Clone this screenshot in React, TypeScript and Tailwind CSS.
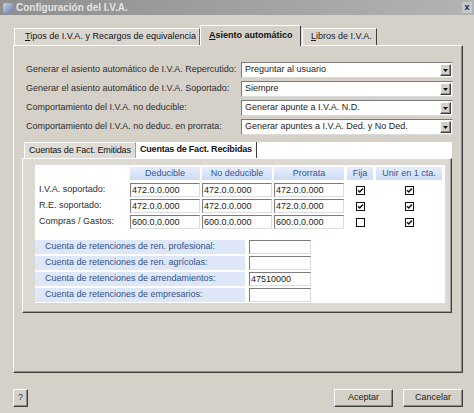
import React from "react";

const sunken =
  "border border-t-[#7b7b7b] border-l-[#7b7b7b] border-r-[#dcdcdc] border-b-[#dcdcdc]";
const raised =
  "border border-t-white border-l-white border-r-[#404040] border-b-[#404040] shadow-[inset_-1px_-1px_0_#8a8a8a]";

function Select({ value }: { value: string }) {
  return (
    <div className={`flex h-[16px] w-[212px] items-center bg-white ${sunken}`}>
      <span className="flex-1 truncate whitespace-nowrap pl-[3px] text-[#1c1c1c]">{value}</span>
      <div
        className={`mr-[1px] flex h-[12px] w-[11px] items-center justify-center bg-[#d4d0c8] ${raised}`}
      >
        <svg width="5" height="3" viewBox="0 0 5 3">
          <path d="M0 0H5L2.5 3Z" fill="#111" />
        </svg>
      </div>
    </div>
  );
}

function Field({ value, w }: { value?: string; w: string }) {
  return (
    <div className={`flex h-[14px] items-center bg-white ${sunken} ${w}`}>
      <span className="whitespace-nowrap pl-[1px] leading-none text-[#1c1c1c]">{value}</span>
    </div>
  );
}

function Check({ on }: { on: boolean }) {
  return (
    <svg width="9" height="9" viewBox="0 0 9 9">
      <rect x="0.5" y="0.5" width="8" height="8" fill="white" stroke="#111" />
      {on && <path d="M2 4.3L3.7 6L7 2.6" fill="none" stroke="#111" strokeWidth="1.5" />}
    </svg>
  );
}

function Head({ children, w }: { children: React.ReactNode; w: string }) {
  return (
    <div
      className={`flex h-[13px] items-center justify-center whitespace-nowrap bg-gradient-to-b from-[#e6eefb] to-[#cddcf4] text-[#35569a] ${w}`}
    >
      {children}
    </div>
  );
}

export default function App() {
  const formRows: [string, string][] = [
    ["Generar el asiento automático de I.V.A. Repercutido:", "Preguntar al usuario"],
    ["Generar el asiento automático de I.V.A. Soportado:", "Siempre"],
    ["Comportamiento del I.V.A. no deducible:", "Generar apunte a I.V.A. N.D."],
    ["Comportamiento del I.V.A. no deduc. en prorrata:", "Generar apuntes a I.V.A. Ded. y No Ded."],
  ];
  const tableRows: [string, string, boolean, boolean][] = [
    ["I.V.A. soportado:", "472.0.0.000", true, true],
    ["R.E. soportado:", "472.0.0.000", true, true],
    ["Compras / Gastos:", "600.0.0.000", false, true],
  ];
  const ret: [string, string][] = [
    ["Cuenta de retenciones de ren. profesional:", ""],
    ["Cuenta de retenciones de ren. agrícolas:", ""],
    ["Cuenta de retenciones de arrendamientos:", "47510000"],
    ["Cuenta de retenciones de empresarios:", ""],
  ];

  return (
    <div className="flex h-[413px] w-[474px] flex-col overflow-hidden bg-[#d5d1c9] font-['Liberation_Sans',Arial,sans-serif] text-[9px] text-[#2b2b2b]">
      {/* title bar */}
      <div className="flex h-[15px] items-center bg-gradient-to-r from-[#8e8e8e] to-[#b3b3b3] pl-[3px] pr-[2px]">
        <div className="mr-[3px] h-[10px] w-[10px] rounded-[2px] bg-gradient-to-br from-[#c9d3e6] to-[#6d7fa6]" />
        <span className="flex-1 whitespace-nowrap text-[10px] font-bold text-[#e4e4e4]">Configuración del I.V.A.</span>
        <div className="flex h-[11px] w-[10px] items-center justify-center bg-[#c8c8c8] text-[9px] font-bold leading-none text-[#222]">
          x
        </div>
      </div>

      <div className="flex flex-1 flex-col px-[11px] pl-[13px]">
        {/* outer tabs */}
        <div className="mt-[10px] flex h-[20px] items-end pl-[1px]">
          <div className="flex h-[17px] w-[186px] items-center whitespace-nowrap border border-b-0 border-t-white border-l-white border-r-[#6a6a6a] bg-[#dad6cf] pl-[10px] text-[#111]">
            <span><u>T</u>ipos de I.V.A. y Recargos de equivalencia</span>
          </div>
          <div className="relative z-10 -mb-[1px] flex h-[21px] w-[101px] items-center whitespace-nowrap border border-b-0 border-t-white border-l-white border-r-[#404040] bg-[#d5d1c9] pl-[8px] font-bold text-[#111]">
            <span><u>A</u>siento automático</span>
          </div>
          <div className="ml-[1px] flex h-[17px] w-[75px] items-center whitespace-nowrap border border-b-0 border-t-white border-l-white border-r-[#404040] bg-[#dad6cf] pl-[8px] text-[#222]">
            <span><u>L</u>ibros de I.V.A.</span>
          </div>
        </div>

        {/* outer panel */}
        <div className={`flex h-[328px] flex-col bg-[#d5d1c9] ${raised}`}>
          <div className="flex flex-col gap-[3px] pl-[12px] pt-[16px]">
            {formRows.map(([l, v]) => (
              <div key={l} className="flex items-center">
                <span className="w-[215px] whitespace-nowrap text-[#2e2e2e]">{l}</span>
                <Select value={v} />
              </div>
            ))}
          </div>

          {/* inner tab control */}
          <div className="ml-[8px] mt-[7px] flex w-[430px] flex-col">
            <div className="flex h-[16px] items-end">
              <div className="ml-[2px] flex h-[16px] w-[112px] items-center whitespace-nowrap border border-b-0 border-t-white border-l-white border-r-[#a0a0a0] bg-[#dfdcd5] pl-[4px] tracking-[-0.15px] text-[#111]">
                Cuentas de Fact. Emitidas
              </div>
              <div className="flex h-[16px] w-[121px] items-center whitespace-nowrap border-r border-r-[#404040] bg-white pl-[4px] font-bold tracking-[-0.2px] text-[#111]">
                Cuentas de Fact. Recibidas
              </div>
              <div className="h-[16px] flex-1 bg-white" />
            </div>
            <div className="flex h-[155px] flex-col border border-t-white border-l-white border-r-[#404040] border-b-[#404040] bg-[#dcd9d2] pb-[9px] pl-[12px] pr-[6px] pt-[6px] shadow-[inset_-1px_-1px_0_#9a9a9a]">
              <div className="flex flex-1 flex-col bg-white pt-[2px]">
                {/* header */}
                <div className="flex h-[13px] items-center">
                  <div className="w-[95px]" />
                  <Head w="w-[70px]">Deducible</Head>
                  <div className="w-[2px]" />
                  <Head w="w-[70px]">No deducible</Head>
                  <div className="w-[2px]" />
                  <Head w="w-[70px]">Prorrata</Head>
                  <div className="w-[3px]" />
                  <Head w="w-[26px]">Fija</Head>
                  <div className="w-[3px]" />
                  <Head w="w-[66px]">Unir en 1 cta.</Head>
                </div>
                <div className="mt-[3px] flex flex-col gap-[2px]">
                  {tableRows.map(([l, v, f, u]) => (
                    <div key={l} className="flex h-[14px] items-center">
                      <span className="w-[95px] whitespace-nowrap pl-[4px] text-[#2e2e2e]">{l}</span>
                      <Field value={v} w="w-[70px]" />
                      <div className="w-[2px]" />
                      <Field value={v} w="w-[70px]" />
                      <div className="w-[2px]" />
                      <Field value={v} w="w-[70px]" />
                      <div className="w-[3px]" />
                      <div className="flex w-[26px] justify-center">
                        <Check on={f} />
                      </div>
                      <div className="w-[3px]" />
                      <div className="flex w-[66px] justify-center">
                        <Check on={u} />
                      </div>
                    </div>
                  ))}
                </div>
                <div className="mt-[11px] flex flex-col gap-[2px]">
                  {ret.map(([l, v]) => (
                    <div key={l} className="flex h-[14px] items-center">
                      <div className="flex h-[14px] w-[210px] items-center whitespace-nowrap bg-[#dde7f7] pl-[10px] text-[#34518c]">
                        {l}
                      </div>
                      <div className="w-[4px]" />
                      <Field value={v} w="w-[62px]" />
                    </div>
                  ))}
                </div>
              </div>
            </div>
          </div>
        </div>

        {/* buttons */}
        <div className="mt-[16px] flex items-center">
          <div className={`flex h-[18px] w-[15px] items-center justify-center bg-[#d5d1c9] text-[#333] ${raised}`}>
            ?
          </div>
          <div className="flex-1" />
          <div className={`flex h-[18px] w-[59px] items-center justify-center bg-[#d5d1c9] text-[#222] ${raised}`}>
            Aceptar
          </div>
          <div className="w-[10px]" />
          <div className={`flex h-[18px] w-[60px] items-center justify-center bg-[#d5d1c9] text-[#222] ${raised}`}>
            Cancelar
          </div>
        </div>
      </div>
    </div>
  );
}
